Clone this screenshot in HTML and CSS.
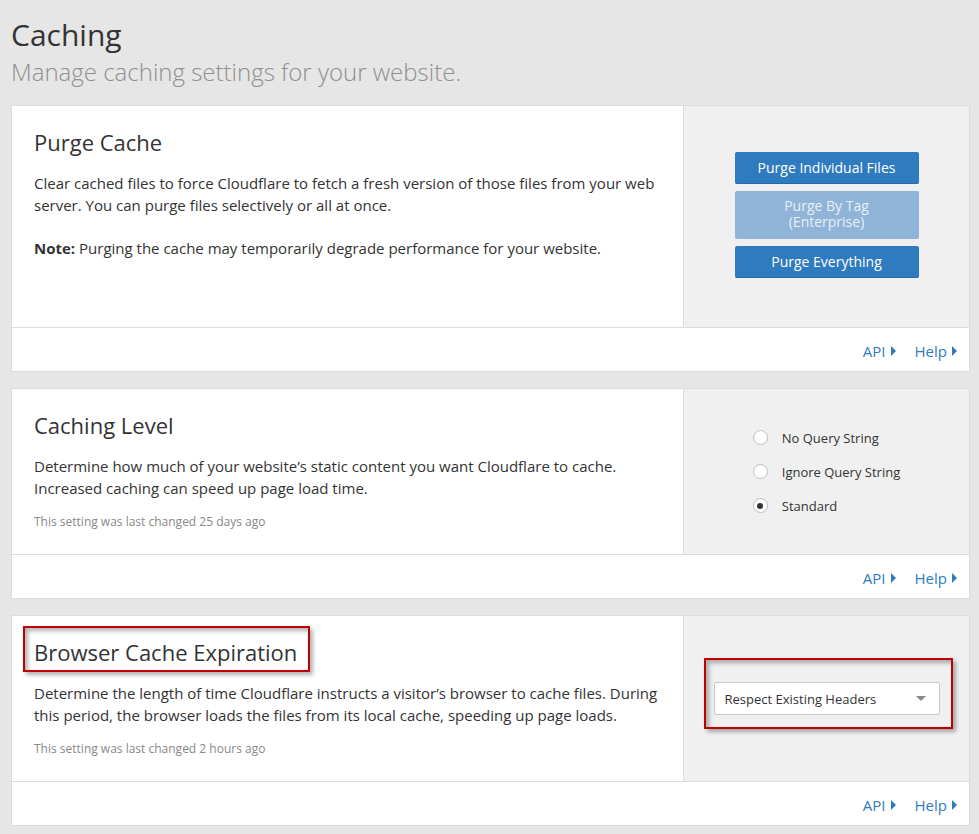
FILE: index.html
```html
<!DOCTYPE html>
<html>
<head>
<meta charset="utf-8">
<link rel="stylesheet" href="styles.css">
</head>
<body>
<div class="page">
  <header class="page-head">
    <h1 class="page-title">Caching</h1>
    <p class="page-sub">Manage caching settings for your website.</p>
  </header>

  <section class="card">
    <div class="card-main card-main--tall">
      <div class="card-left">
        <h2 class="card-title">Purge Cache</h2>
        <p class="card-desc">Clear cached files to force Cloudflare to fetch a fresh version of those files from your web server. You can purge files selectively or all at once.</p>
        <p class="card-desc card-note"><strong>Note:</strong> Purging the cache may temporarily degrade performance for your website.</p>
      </div>
      <div class="card-right">
        <div class="btn-stack">
          <button class="btn">Purge Individual Files</button>
          <button class="btn btn-disabled"><span class="btn-line">Purge By Tag</span><span class="btn-line">(Enterprise)</span></button>
          <button class="btn">Purge Everything</button>
        </div>
      </div>
    </div>
    <div class="card-foot">
      <a class="foot-link">API<span class="tri"></span></a>
      <a class="foot-link">Help<span class="tri"></span></a>
    </div>
  </section>

  <section class="card">
    <div class="card-main">
      <div class="card-left">
        <h2 class="card-title">Caching Level</h2>
        <p class="card-desc">Determine how much of your website’s static content you want Cloudflare to cache. Increased caching can speed up page load time.</p>
        <p class="card-meta">This setting was last changed 25 days ago</p>
      </div>
      <div class="card-right">
        <div class="radios">
          <label class="radio"><span class="radio-dot"></span>No Query String</label>
          <label class="radio"><span class="radio-dot"></span>Ignore Query String</label>
          <label class="radio"><span class="radio-dot is-on"></span>Standard</label>
        </div>
      </div>
    </div>
    <div class="card-foot">
      <a class="foot-link">API<span class="tri"></span></a>
      <a class="foot-link">Help<span class="tri"></span></a>
    </div>
  </section>

  <section class="card">
    <div class="card-main">
      <div class="card-left">
        <h2 class="card-title"><span class="annotated annotated--title">Browser Cache Expiration<span class="mark mark--title"></span></span></h2>
        <p class="card-desc">Determine the length of time Cloudflare instructs a visitor’s browser to cache files. During this period, the browser loads the files from its local cache, speeding up page loads.</p>
        <p class="card-meta">This setting was last changed 2 hours ago</p>
      </div>
      <div class="card-right">
        <div class="annotated">
          <div class="select">
            <span>Respect Existing Headers</span>
            <span class="caret"></span>
          </div>
          <span class="mark mark--select"></span>
        </div>
      </div>
    </div>
    <div class="card-foot">
      <a class="foot-link">API<span class="tri"></span></a>
      <a class="foot-link">Help<span class="tri"></span></a>
    </div>
  </section>
</div>
</body>
</html>
```

FILE: styles.css
```css
* { box-sizing: border-box; }
html, body { margin: 0; padding: 0; }
body {
  background: #e6e6e6;
  font-family: "Open Sans", "Liberation Sans", sans-serif;
  color: #333;
}
.page { padding: 0 9px 0 11px; }

.page-head { padding-top: 14px; height: 105px; }
.page-title {
  margin: 0;
  font-size: 30px;
  font-weight: 400;
  line-height: 42px;
  color: #333;
}
.page-sub {
  margin: 0;
  font-size: 24px;
  font-weight: 300;
  line-height: 32px;
  color: #8f8f8f;
}

.card {
  background: #fff;
  border: 1px solid #dcdcdc;
  margin-bottom: 16px;
}
.card-main {
  display: flex;
  min-height: 166px;
  border-bottom: 1px solid #dcdcdc;
}
.card-main--tall { min-height: 222px; }
.card-left {
  flex: 1;
  padding: 22px 22px 20px 22px;
}
.card-right {
  width: 286px;
  flex: none;
  background: #f0f0f0;
  border-left: 1px solid #dcdcdc;
  display: flex;
  align-items: center;
  justify-content: center;
}
.card-title {
  margin: 0 0 16px;
  font-size: 22px;
  font-weight: 400;
  line-height: 28px;
  color: #333;
}
.card-desc {
  margin: 0;
  font-size: 15px;
  line-height: 22px;
  color: #333;
}
.card-note { margin-top: 21px; }
.card-desc strong { font-weight: 700; }
.card-meta {
  margin: 14px 0 0;
  font-size: 12px;
  line-height: 18px;
  color: #888;
}

.card-foot {
  height: 43px;
  display: flex;
  align-items: center;
  justify-content: flex-end;
  gap: 19px;
  padding: 2px 12px 0 0;
}
.foot-link {
  color: #2f7bbf;
  font-size: 15px;
  display: inline-flex;
  align-items: center;
  cursor: pointer;
}
.tri {
  display: inline-block;
  margin-left: 5px;
  width: 0; height: 0;
  border-top: 5px solid transparent;
  border-bottom: 5px solid transparent;
  border-left: 5px solid #2f7bbf;
}

.btn-stack {
  display: flex;
  flex-direction: column;
  gap: 7px;
  width: 184px;
  margin-bottom: 4px;
}
.btn {
  border: 0;
  border-radius: 2px;
  background: #2f7bbf;
  color: #fff;
  font-family: "Open Sans", "Liberation Sans", sans-serif;
  font-size: 14px;
  line-height: 17px;
  height: 32px;
  padding: 0;
  border-bottom: 1px solid #2868a6;
}
.btn-disabled {
  height: 48px;
  background: #8fb4d8;
  color: #e9f0f7;
  border-bottom: 1px solid #8fb4d8;
  display: flex;
  flex-direction: column;
  align-items: center;
  justify-content: center;
}
.btn-line { display: block; line-height: 16px; height: 16px; }

.radios {
  display: flex;
  flex-direction: column;
  gap: 16px;
}
.radio {
  display: flex;
  align-items: center;
  font-size: 13px;
  line-height: 18px;
  color: #333;
}
.radio-dot {
  width: 15px; height: 15px;
  border-radius: 50%;
  border: 1px solid #bdbdbd;
  background: #fff;
  margin-right: 14px;
  position: relative;
}
.radio-dot.is-on::after {
  content: "";
  position: absolute;
  left: 3.5px; top: 3.5px;
  width: 6px; height: 6px;
  border-radius: 50%;
  background: #333;
}

.select {
  width: 226px;
  height: 33px;
  background: #fff;
  border: 1px solid #c8c8c8;
  border-radius: 2px;
  display: flex;
  align-items: center;
  justify-content: space-between;
  padding: 0 13px 0 10px;
  font-size: 13px;
  color: #333;
}
.caret {
  width: 0; height: 0;
  border-left: 5px solid transparent;
  border-right: 5px solid transparent;
  border-top: 5px solid #888;
}

.annotated { position: relative; display: inline-block; }
.mark {
  position: absolute;
  border: 2px solid #c00000;
  box-shadow: 3px 3px 4px rgba(0,0,0,0.3), inset 3px 3px 4px rgba(0,0,0,0.3);
  pointer-events: none;
}
.mark--title { left: -11px; right: -13px; top: -12px; bottom: -6px; }
.mark--select { left: -10px; right: -13px; top: -24px; bottom: -14px; }
```
